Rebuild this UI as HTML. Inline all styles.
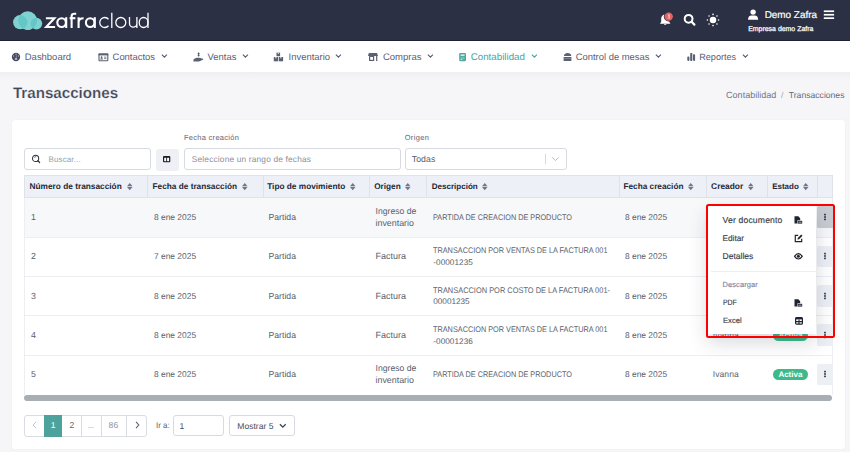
<!DOCTYPE html>
<html><head><meta charset="utf-8"><style>
*{box-sizing:border-box;margin:0;padding:0}
html,body{width:850px;height:452px;overflow:hidden}
body{background:#f6f6f9;font-family:"Liberation Sans",sans-serif;position:relative;text-rendering:geometricPrecision}
</style></head><body>
<div style="position:absolute;left:0;top:0;width:850px;height:41px;background:#2b3044"></div>
<div style="position:absolute;left:0;top:40px;width:850px;height:1px;background:#1c2133"></div>
<svg style="position:absolute;left:0;top:0" width="160" height="41" viewBox="0 0 160 41">
<defs><clipPath id="cb"><circle cx="27.7" cy="20.6" r="9.4"/></clipPath></defs>
<g fill="#80d2d2">
<circle cx="20.2" cy="22.2" r="7.1"/>
<circle cx="27.7" cy="20.6" r="9.4"/>
<circle cx="36.4" cy="23.6" r="5.8"/>
<circle cx="28" cy="24.5" r="5.6"/>
</g>
<g fill="#64c7c7" clip-path="url(#cb)">
<circle cx="20.2" cy="22.2" r="7.1"/>
<circle cx="36.4" cy="23.6" r="5.8"/>
</g>
<g fill="none" stroke="#fff" stroke-width="2.1">
<path d="M45.9 18.2H54.4L46.2 27H55.1" stroke-linejoin="miter"/>
<ellipse cx="61.6" cy="22.6" rx="4.3" ry="4.4"/>
<path d="M66.2 17.2V28"/>
<path d="M71.6 28V16.2C71.6 14.3 72.8 13.8 74.6 13.8H76.2"/>
<path d="M69.6 18.2H75.4"/>
<path d="M78.6 17.2V28M78.6 22.6C78.6 19.6 80.4 18.2 83.6 18.2"/>
<ellipse cx="90.2" cy="22.6" rx="4.3" ry="4.4"/>
<path d="M94.8 17.2V28"/>
</g>
<g fill="none" stroke="#fff" stroke-width="1.3">
<path d="M108.5 19.2A5 5 0 1 0 108.5 25.8"/>
<path d="M111.8 12.8V28"/>
<circle cx="120.8" cy="22.5" r="5"/>
<path d="M129.5 17V23.4A3.7 3.7 0 0 0 136.9 23.4V17M136.9 22V28"/>
<ellipse cx="143.6" cy="22.5" rx="4.4" ry="5"/>
<path d="M148 12.8V28"/>
</g>
</svg>
<svg style="position:absolute;left:656px;top:10px" width="20" height="20" viewBox="0 0 20 20">
<path d="M9.2 4.6c-2.4 0-4 1.9-4 4.2v3l-1.2 1.9h10.4l-1.2-1.9v-3c0-2.3-1.6-4.2-4-4.2z" fill="#fff"/>
<path d="M7.9 13.9a1.4 1.4 0 0 0 2.6 0z" fill="#fff"/>
<circle cx="12.7" cy="6.6" r="4.9" fill="#2b3044"/>
<circle cx="12.7" cy="6.6" r="4.2" fill="#e96262"/>
<path d="M12.3 5.1l0.8-0.5v4" stroke="#fff" stroke-width="0.9" fill="none" opacity=".95"/>
</svg>
<svg style="position:absolute;left:682px;top:12px" width="16" height="16" viewBox="0 0 16 16">
<circle cx="6.6" cy="6.8" r="3.9" stroke="#fff" stroke-width="2" fill="none"/>
<path d="M9.6 9.8L12.4 12.6" stroke="#fff" stroke-width="2.2" stroke-linecap="round"/>
</svg>
<svg style="position:absolute;left:705.2px;top:11.6px" width="16" height="16" viewBox="0 0 16 16">
<circle cx="8" cy="8" r="3.25" fill="#fff"/>
<g fill="#fff"><circle cx="13.60" cy="8.00" r="0.8"/><circle cx="11.96" cy="11.96" r="0.8"/><circle cx="8.00" cy="13.60" r="0.8"/><circle cx="4.04" cy="11.96" r="0.8"/><circle cx="2.40" cy="8.00" r="0.8"/><circle cx="4.04" cy="4.04" r="0.8"/><circle cx="8.00" cy="2.40" r="0.8"/><circle cx="11.96" cy="4.04" r="0.8"/></g>
</svg>
<svg style="position:absolute;left:747px;top:9px" width="13" height="12" viewBox="0 0 13 12">
<circle cx="6.1" cy="3.1" r="2.7" fill="#fff"/>
<path d="M1 10.8c0-2.8 1.5-4.3 3.3-4.3h3.6c1.8 0 3.3 1.5 3.3 4.3z" fill="#fff"/>
</svg>
<svg style="position:absolute;left:823px;top:10px" width="12" height="10" viewBox="0 0 12 10">
<rect x="0.8" y="0.4" width="10.3" height="1.7" fill="#fff"/><rect x="0.8" y="3.9" width="10.3" height="1.7" fill="#fff"/><rect x="0.8" y="7.3" width="10.3" height="1.7" fill="#fff"/>
</svg>
<div style="position:absolute;left:764.70px;top:9.10px;font-size:9.912px;line-height:13px;font-weight:400;color:#ffffff;white-space:nowrap;-webkit-text-stroke:0.2px #fff">Demo Zafra</div>
<div style="position:absolute;left:748.20px;top:24.60px;font-size:6.955px;line-height:9px;font-weight:400;color:#ffffff;white-space:nowrap;-webkit-text-stroke:0.25px #fff">Empresa demo Zafra</div>
<div style="position:absolute;left:0;top:72px;width:850px;height:8px;background:linear-gradient(rgba(30,35,60,.035),rgba(30,35,60,0))"></div>
<div style="position:absolute;left:0;top:41px;width:850px;height:31px;background:#fff"></div>
<div style="position:absolute;left:24.80px;top:52.30px;font-size:9.468px;line-height:12px;font-weight:400;color:#5b6072;white-space:nowrap">Dashboard</div>
<div style="position:absolute;left:112.60px;top:51.30px;font-size:9.422px;line-height:12px;font-weight:400;color:#5b6072;white-space:nowrap">Contactos</div>
<svg style="position:absolute;left:160.5px;top:53px" width="7" height="6" viewBox="0 0 7 6"><path d="M0.9 1.6L3.4 4.1L5.9 1.6" stroke="#5b6072" stroke-width="1.2" fill="none"/></svg>
<div style="position:absolute;left:207.60px;top:51.30px;font-size:9.423px;line-height:12px;font-weight:400;color:#5b6072;white-space:nowrap;transform:scaleX(1.0000);transform-origin:0 0">Ventas</div>
<svg style="position:absolute;left:241.5px;top:53px" width="7" height="6" viewBox="0 0 7 6"><path d="M0.9 1.6L3.4 4.1L5.9 1.6" stroke="#5b6072" stroke-width="1.2" fill="none"/></svg>
<div style="position:absolute;left:288.60px;top:51.30px;font-size:9.433px;line-height:12px;font-weight:400;color:#5b6072;white-space:nowrap">Inventario</div>
<svg style="position:absolute;left:335.2px;top:53px" width="7" height="6" viewBox="0 0 7 6"><path d="M0.9 1.6L3.4 4.1L5.9 1.6" stroke="#5b6072" stroke-width="1.2" fill="none"/></svg>
<div style="position:absolute;left:383.00px;top:52.30px;font-size:9.497px;line-height:12px;font-weight:400;color:#5b6072;white-space:nowrap">Compras</div>
<svg style="position:absolute;left:427.1px;top:53px" width="7" height="6" viewBox="0 0 7 6"><path d="M0.9 1.6L3.4 4.1L5.9 1.6" stroke="#5b6072" stroke-width="1.2" fill="none"/></svg>
<div style="position:absolute;left:470.70px;top:51.30px;font-size:9.755px;line-height:13px;font-weight:400;color:#4aa79f;white-space:nowrap">Contabilidad</div>
<svg style="position:absolute;left:530.6px;top:53px" width="7" height="6" viewBox="0 0 7 6"><path d="M0.9 1.6L3.4 4.1L5.9 1.6" stroke="#4aa79f" stroke-width="1.2" fill="none"/></svg>
<div style="position:absolute;left:575.70px;top:51.30px;font-size:9.434px;line-height:12px;font-weight:400;color:#5b6072;white-space:nowrap">Control de mesas</div>
<svg style="position:absolute;left:654.5px;top:53px" width="7" height="6" viewBox="0 0 7 6"><path d="M0.9 1.6L3.4 4.1L5.9 1.6" stroke="#5b6072" stroke-width="1.2" fill="none"/></svg>
<div style="position:absolute;left:699.20px;top:51.30px;font-size:9.123px;line-height:12px;font-weight:400;color:#5b6072;white-space:nowrap">Reportes</div>
<svg style="position:absolute;left:741.5px;top:53px" width="7" height="6" viewBox="0 0 7 6"><path d="M0.9 1.6L3.4 4.1L5.9 1.6" stroke="#5b6072" stroke-width="1.2" fill="none"/></svg>
<svg style="position:absolute;left:11px;top:52px" width="10" height="10" viewBox="0 0 10 10">
<circle cx="5" cy="5" r="4.15" fill="#474c63"/><g fill="#a4a8b6"><circle cx="5" cy="2.3" r="0.75"/><circle cx="2.6" cy="4" r="0.7"/><circle cx="7.4" cy="4" r="0.7"/></g><path d="M3.7 7.6a1.3 1.3 0 0 1 2.6 0z" fill="#fff"/><path d="M5 6.6L5.6 3.4" stroke="#a4a8b6" stroke-width="0.6"/></svg>
<svg style="position:absolute;left:97.5px;top:53px" width="11" height="9" viewBox="0 0 11 9">
<rect x="1" y="1" width="8.8" height="6.8" rx="0.6" fill="none" stroke="#5b6072" stroke-width="1.1"/><rect x="0.5" y="0.5" width="9.8" height="1.9" fill="#5b6072"/>
<circle cx="3.6" cy="4.2" r="0.9" fill="#5b6072"/><path d="M2.2 6.6c0-1 .6-1.3 1.4-1.3s1.4.3 1.4 1.3z" fill="#5b6072"/><rect x="6.1" y="3.7" width="2.3" height="0.8" fill="#5b6072"/><rect x="6.1" y="5.3" width="2.3" height="0.8" fill="#5b6072"/></svg>
<svg style="position:absolute;left:192.5px;top:52px" width="11" height="10" viewBox="0 0 11 10">
<path d="M5.6 0.5V4.6" stroke="#5b6072" stroke-width="1.1"/><path d="M4.6 1.6h2M4.6 3.4h2" stroke="#5b6072" stroke-width="0.9"/>
<path d="M0.5 7.5c1.5-1.6 3-2 5-1.8l2.4 0.3c0.8 0.2 0.7 1 0 1.1L5.6 7.2l4-0.6L10.4 7.5 6 9.5H0.5z" fill="#5b6072"/></svg>
<svg style="position:absolute;left:272.8px;top:52px" width="11" height="10" viewBox="0 0 11 10">
<rect x="3.5" y="0.6" width="3.6" height="3.6" fill="#5b6072"/><rect x="0.8" y="5" width="4.3" height="4.3" fill="#5b6072"/><rect x="5.8" y="5" width="4.3" height="4.3" fill="#5b6072"/>
<rect x="4.8" y="0.6" width="1" height="1.3" fill="#fff"/><rect x="2.4" y="5" width="1" height="1.3" fill="#fff"/><rect x="7.4" y="5" width="1" height="1.3" fill="#fff"/></svg>
<svg style="position:absolute;left:367px;top:52px" width="12" height="10" viewBox="0 0 12 10">
<path d="M1.9 0.9H10L11 3.9H0.9z" fill="#5b6072"/><rect x="2" y="3.9" width="5.2" height="5.2" rx="0.6" fill="#5b6072"/><rect x="3.2" y="5" width="2.8" height="2.8" fill="#fff"/><rect x="9.1" y="3.9" width="1.2" height="5.2" fill="#5b6072"/></svg>
<svg style="position:absolute;left:459px;top:52.8px" width="8" height="9" viewBox="0 0 8 9">
<rect x="0.2" y="0.1" width="6.8" height="8.1" rx="1.1" fill="#4aa79f"/><rect x="1.6" y="1.4" width="4" height="1.5" fill="#fff" opacity=".85"/>
<rect x="1.6" y="3.8" width="4" height="2.6" fill="#fff" opacity=".25"/><rect x="1.6" y="6.1" width="1.6" height="0.9" fill="#fff" opacity=".8"/></svg>
<svg style="position:absolute;left:562.5px;top:52px" width="9" height="10" viewBox="0 0 9 10">
<path d="M0.9 3.9C1.2 1.8 2.6 1 4.6 1S8 1.8 8.3 3.9z" fill="#5b6072"/><rect x="0.6" y="5" width="7.8" height="4" rx="0.4" fill="#5b6072"/><rect x="0.6" y="6.4" width="7.8" height="0.6" fill="#fff" opacity=".3"/></svg>
<svg style="position:absolute;left:687px;top:52px" width="9" height="10" viewBox="0 0 9 10">
<rect x="0.3" y="4.6" width="2.1" height="4.3" rx="0.8" fill="#5b6072"/><rect x="3.2" y="0.9" width="2.1" height="8" rx="0.6" fill="#5b6072"/><rect x="6" y="2.2" width="2.1" height="6.7" rx="0.8" fill="#5b6072"/></svg>
<div style="position:absolute;left:12.90px;top:83.90px;font-size:15.16px;line-height:19px;font-weight:700;color:#3f4454;white-space:nowrap;-webkit-text-stroke:0.22px #f6f6f9">Transacciones</div>
<div style="position:absolute;left:726.10px;top:89.00px;font-size:9.028px;line-height:12px;font-weight:400;color:#717689;white-space:nowrap;transform:scaleX(1.0000);transform-origin:0 0">Contabilidad</div>
<div style="position:absolute;left:781.00px;top:90.00px;font-size:8.5px;line-height:11px;font-weight:400;color:#a0a4b0;white-space:nowrap">/</div>
<div style="position:absolute;left:788.80px;top:90.00px;font-size:8.629px;line-height:11px;font-weight:400;color:#646979;white-space:nowrap">Transacciones</div>
<div style="position:absolute;left:12px;top:120px;width:833px;height:328.5px;background:#fff;border-radius:3px;box-shadow:0 0 1.5px rgba(40,45,70,.08)"></div>
<div style="position:absolute;left:184.00px;top:133.30px;font-size:7.452px;line-height:10px;font-weight:400;color:#5f6474;white-space:nowrap;letter-spacing:0.308px">Fecha creación</div>
<div style="position:absolute;left:404.70px;top:133.10px;font-size:7.452px;line-height:10px;font-weight:400;color:#5f6474;white-space:nowrap;letter-spacing:0.371px">Origen</div>
<div style="position:absolute;left:24px;top:148.3px;width:126.5px;height:22px;border:1px solid #d7dae0;border-radius:3px;background:#fff"></div>
<svg style="position:absolute;left:30px;top:153px" width="12" height="12" viewBox="0 0 12 12">
<circle cx="5.6" cy="5.4" r="3.1" stroke="#2f3441" stroke-width="1.05" fill="none"/><path d="M4.3 4.4a1.8 1.8 0 0 1 2-0.6" stroke="#2f3441" stroke-width="0.8" fill="none"/><path d="M7.9 7.7L9.6 9.5" stroke="#2f3441" stroke-width="1.2" stroke-linecap="round"/></svg>
<div style="position:absolute;left:48.60px;top:154.90px;font-size:7.992px;line-height:10px;font-weight:400;color:#9aa0ad;white-space:nowrap;letter-spacing:0.117px">Buscar...</div>
<div style="position:absolute;left:155.5px;top:148.5px;width:23.5px;height:22px;border-radius:3px;background:#eef0f5"></div>
<svg style="position:absolute;left:163px;top:155.8px" width="8" height="7" viewBox="0 0 8 7">
<rect x="0" y="0" width="7.3" height="6.2" rx="0.9" fill="#1a1e2a"/><rect x="1.2" y="1.8" width="2" height="3.4" fill="#fff"/><rect x="4.1" y="1.8" width="2" height="3.4" fill="#fff"/></svg>
<div style="position:absolute;left:183.7px;top:148.3px;width:217px;height:21.8px;border:1px solid #d7dae0;border-radius:3px;background:#fff"></div>
<div style="position:absolute;left:191.80px;top:153.70px;font-size:8.316px;line-height:11px;font-weight:400;color:#8a8f9c;white-space:nowrap;letter-spacing:0.185px">Seleccione un rango de fechas</div>
<div style="position:absolute;left:404.5px;top:147.8px;width:162.7px;height:22.2px;border:1px solid #d7dae0;border-radius:3px;background:#fff"></div>
<div style="position:absolute;left:411.80px;top:154.20px;font-size:8.748px;line-height:11px;font-weight:400;color:#585d6b;white-space:nowrap;letter-spacing:0.040px">Todas</div>
<div style="position:absolute;left:544.5px;top:153.7px;width:1px;height:10.8px;background:#d5d8de"></div>
<svg style="position:absolute;left:551px;top:156px" width="9" height="6" viewBox="0 0 9 6"><path d="M1 1.2L4.4 4.6L7.8 1.2" stroke="#b8bcc4" stroke-width="1" fill="none"/></svg>
<div style="position:absolute;left:24px;top:175.2px;width:808.5px;height:22.6px;background:#edf0f6;border:1px solid #dfe2e8"></div>
<div style="position:absolute;left:147.0px;top:175.2px;width:1px;height:22.6px;background:#dfe2e8"></div>
<div style="position:absolute;left:262.5px;top:175.2px;width:1px;height:22.6px;background:#dfe2e8"></div>
<div style="position:absolute;left:369.2px;top:175.2px;width:1px;height:22.6px;background:#dfe2e8"></div>
<div style="position:absolute;left:425.9px;top:175.2px;width:1px;height:22.6px;background:#dfe2e8"></div>
<div style="position:absolute;left:618.5px;top:175.2px;width:1px;height:22.6px;background:#dfe2e8"></div>
<div style="position:absolute;left:706.0px;top:175.2px;width:1px;height:22.6px;background:#dfe2e8"></div>
<div style="position:absolute;left:766.5px;top:175.2px;width:1px;height:22.6px;background:#dfe2e8"></div>
<div style="position:absolute;left:817.1px;top:175.2px;width:1px;height:22.6px;background:#dfe2e8"></div>
<div style="position:absolute;left:24px;top:197.8px;width:808.5px;height:39.4px;background:#f7f8fa"></div>
<div style="position:absolute;left:24px;top:197.8px;width:1px;height:197px;background:#eceef2"></div>
<div style="position:absolute;left:831.5px;top:197.8px;width:1px;height:197px;background:#eceef2"></div>
<div style="position:absolute;left:24px;top:236.7px;width:808.5px;height:1px;background:#eceef2"></div>
<div style="position:absolute;left:24px;top:276.0px;width:808.5px;height:1px;background:#eceef2"></div>
<div style="position:absolute;left:24px;top:315.3px;width:808.5px;height:1px;background:#eceef2"></div>
<div style="position:absolute;left:24px;top:354.6px;width:808.5px;height:1px;background:#eceef2"></div>
<div style="position:absolute;left:29.50px;top:181.40px;font-size:8.31px;line-height:11px;font-weight:700;color:#222736;white-space:nowrap">Número de transacción</div>
<svg style="position:absolute;left:126.6px;top:182.8px" width="6" height="8" viewBox="0 0 6 8"><path d="M0 3.35L2.75 0L5.5 3.35z M0 3.95L2.75 7.3L5.5 3.95z" fill="#70758a"/></svg>
<div style="position:absolute;left:152.50px;top:181.40px;font-size:8.288px;line-height:11px;font-weight:700;color:#222736;white-space:nowrap">Fecha de transacción</div>
<svg style="position:absolute;left:242px;top:182.8px" width="6" height="8" viewBox="0 0 6 8"><path d="M0 3.35L2.75 0L5.5 3.35z M0 3.95L2.75 7.3L5.5 3.95z" fill="#70758a"/></svg>
<div style="position:absolute;left:267.20px;top:181.40px;font-size:8.29px;line-height:11px;font-weight:700;color:#222736;white-space:nowrap">Tipo de movimiento</div>
<svg style="position:absolute;left:350px;top:182.8px" width="6" height="8" viewBox="0 0 6 8"><path d="M0 3.35L2.75 0L5.5 3.35z M0 3.95L2.75 7.3L5.5 3.95z" fill="#70758a"/></svg>
<div style="position:absolute;left:374.20px;top:181.40px;font-size:8.226px;line-height:11px;font-weight:700;color:#222736;white-space:nowrap">Origen</div>
<svg style="position:absolute;left:405.3px;top:182.8px" width="6" height="8" viewBox="0 0 6 8"><path d="M0 3.35L2.75 0L5.5 3.35z M0 3.95L2.75 7.3L5.5 3.95z" fill="#70758a"/></svg>
<div style="position:absolute;left:431.80px;top:181.40px;font-size:8.022px;line-height:11px;font-weight:700;color:#222736;white-space:nowrap">Descripción</div>
<svg style="position:absolute;left:482px;top:182.8px" width="6" height="8" viewBox="0 0 6 8"><path d="M0 3.35L2.75 0L5.5 3.35z M0 3.95L2.75 7.3L5.5 3.95z" fill="#70758a"/></svg>
<div style="position:absolute;left:623.50px;top:181.40px;font-size:8.246px;line-height:11px;font-weight:700;color:#222736;white-space:nowrap;letter-spacing:0.000px">Fecha creación</div>
<svg style="position:absolute;left:688.3px;top:182.8px" width="6" height="8" viewBox="0 0 6 8"><path d="M0 3.35L2.75 0L5.5 3.35z M0 3.95L2.75 7.3L5.5 3.95z" fill="#70758a"/></svg>
<div style="position:absolute;left:711.10px;top:181.40px;font-size:8.375px;line-height:11px;font-weight:700;color:#222736;white-space:nowrap">Creador</div>
<svg style="position:absolute;left:747.6px;top:182.8px" width="6" height="8" viewBox="0 0 6 8"><path d="M0 3.35L2.75 0L5.5 3.35z M0 3.95L2.75 7.3L5.5 3.95z" fill="#70758a"/></svg>
<div style="position:absolute;left:772.20px;top:182.40px;font-size:7.98px;line-height:10px;font-weight:700;color:#222736;white-space:nowrap">Estado</div>
<svg style="position:absolute;left:803.3px;top:182.8px" width="6" height="8" viewBox="0 0 6 8"><path d="M0 3.35L2.75 0L5.5 3.35z M0 3.95L2.75 7.3L5.5 3.95z" fill="#70758a"/></svg>
<div style="position:absolute;left:31.00px;top:211.00px;font-size:8.8px;line-height:12px;font-weight:400;color:#5a5f6d;white-space:nowrap">1</div>
<div style="position:absolute;left:153.80px;top:212.00px;font-size:8.448px;line-height:11px;font-weight:400;color:#5a5f6d;white-space:nowrap;transform:scaleX(0.9960);transform-origin:0 0">8 ene 2025</div>
<div style="position:absolute;left:268.50px;top:212.00px;font-size:8.684px;line-height:11px;font-weight:400;color:#5a5f6d;white-space:nowrap">Partida</div>
<div style="position:absolute;left:375.50px;top:206.20px;font-size:8.679px;line-height:11px;font-weight:400;color:#5a5f6d;white-space:nowrap">Ingreso de</div>
<div style="position:absolute;left:375.50px;top:216.80px;font-size:8.885px;line-height:12px;font-weight:400;color:#5a5f6d;white-space:nowrap">inventario</div>
<div style="position:absolute;left:433.30px;top:212.00px;font-size:8.2px;line-height:11px;font-weight:400;color:#5a5f6d;white-space:nowrap;transform:scaleX(0.8901);transform-origin:0 0">PARTIDA DE CREACION DE PRODUCTO</div>
<div style="position:absolute;left:625.20px;top:212.00px;font-size:8.448px;line-height:11px;font-weight:400;color:#5a5f6d;white-space:nowrap;transform:scaleX(0.9960);transform-origin:0 0">8 ene 2025</div>
<div style="position:absolute;left:816.6px;top:206.4px;width:16px;height:21.8px;background:#c8cbd1;border-radius:1.5px 0 0 1.5px"></div>
<svg style="position:absolute;left:823px;top:213.0px" width="4" height="8" viewBox="0 0 4 8"><g fill="#1f2430"><rect x="1.2" y="0.8" width="1.6" height="1.6"/><rect x="1.2" y="3.2" width="1.6" height="1.6"/><rect x="1.2" y="5.6" width="1.6" height="1.6"/></g></svg>
<div style="position:absolute;left:31.00px;top:250.30px;font-size:8.8px;line-height:12px;font-weight:400;color:#5a5f6d;white-space:nowrap">2</div>
<div style="position:absolute;left:153.80px;top:251.30px;font-size:8.448px;line-height:11px;font-weight:400;color:#5a5f6d;white-space:nowrap;transform:scaleX(0.9960);transform-origin:0 0">7 ene 2025</div>
<div style="position:absolute;left:268.50px;top:251.30px;font-size:8.684px;line-height:11px;font-weight:400;color:#5a5f6d;white-space:nowrap">Partida</div>
<div style="position:absolute;left:375.50px;top:250.30px;font-size:9.001px;line-height:12px;font-weight:400;color:#5a5f6d;white-space:nowrap">Factura</div>
<div style="position:absolute;left:433.30px;top:245.30px;font-size:8.2px;line-height:11px;font-weight:400;color:#5a5f6d;white-space:nowrap;transform:scaleX(0.8926);transform-origin:0 0">TRANSACCION POR VENTAS DE LA FACTURA 001</div>
<div style="position:absolute;left:433.30px;top:256.90px;font-size:8.2px;line-height:11px;font-weight:400;color:#5a5f6d;white-space:nowrap;letter-spacing:0.043px">-00001235</div>
<div style="position:absolute;left:625.20px;top:251.30px;font-size:8.448px;line-height:11px;font-weight:400;color:#5a5f6d;white-space:nowrap;transform:scaleX(0.9960);transform-origin:0 0">8 ene 2025</div>
<div style="position:absolute;left:816.6px;top:245.70000000000002px;width:16px;height:21.8px;background:#ecf0f5;border-radius:1.5px 0 0 1.5px"></div>
<svg style="position:absolute;left:823px;top:252.3px" width="4" height="8" viewBox="0 0 4 8"><g fill="#1f2430"><rect x="1.2" y="0.8" width="1.6" height="1.6"/><rect x="1.2" y="3.2" width="1.6" height="1.6"/><rect x="1.2" y="5.6" width="1.6" height="1.6"/></g></svg>
<div style="position:absolute;left:31.00px;top:289.60px;font-size:8.8px;line-height:12px;font-weight:400;color:#5a5f6d;white-space:nowrap">3</div>
<div style="position:absolute;left:153.80px;top:290.60px;font-size:8.448px;line-height:11px;font-weight:400;color:#5a5f6d;white-space:nowrap;transform:scaleX(0.9960);transform-origin:0 0">8 ene 2025</div>
<div style="position:absolute;left:268.50px;top:290.60px;font-size:8.684px;line-height:11px;font-weight:400;color:#5a5f6d;white-space:nowrap">Partida</div>
<div style="position:absolute;left:375.50px;top:289.60px;font-size:9.001px;line-height:12px;font-weight:400;color:#5a5f6d;white-space:nowrap">Factura</div>
<div style="position:absolute;left:433.30px;top:284.60px;font-size:8.2px;line-height:11px;font-weight:400;color:#5a5f6d;white-space:nowrap;transform:scaleX(0.9075);transform-origin:0 0">TRANSACCION POR COSTO DE LA FACTURA 001-</div>
<div style="position:absolute;left:433.30px;top:296.20px;font-size:8.2px;line-height:11px;font-weight:400;color:#5a5f6d;white-space:nowrap;letter-spacing:-0.020px">00001235</div>
<div style="position:absolute;left:625.20px;top:290.60px;font-size:8.448px;line-height:11px;font-weight:400;color:#5a5f6d;white-space:nowrap;transform:scaleX(0.9960);transform-origin:0 0">8 ene 2025</div>
<div style="position:absolute;left:816.6px;top:285.0px;width:16px;height:21.8px;background:#ecf0f5;border-radius:1.5px 0 0 1.5px"></div>
<svg style="position:absolute;left:823px;top:291.6px" width="4" height="8" viewBox="0 0 4 8"><g fill="#1f2430"><rect x="1.2" y="0.8" width="1.6" height="1.6"/><rect x="1.2" y="3.2" width="1.6" height="1.6"/><rect x="1.2" y="5.6" width="1.6" height="1.6"/></g></svg>
<div style="position:absolute;left:31.00px;top:328.90px;font-size:8.8px;line-height:12px;font-weight:400;color:#5a5f6d;white-space:nowrap">4</div>
<div style="position:absolute;left:153.80px;top:329.90px;font-size:8.448px;line-height:11px;font-weight:400;color:#5a5f6d;white-space:nowrap;transform:scaleX(0.9960);transform-origin:0 0">8 ene 2025</div>
<div style="position:absolute;left:268.50px;top:329.90px;font-size:8.684px;line-height:11px;font-weight:400;color:#5a5f6d;white-space:nowrap">Partida</div>
<div style="position:absolute;left:375.50px;top:328.90px;font-size:9.001px;line-height:12px;font-weight:400;color:#5a5f6d;white-space:nowrap">Factura</div>
<div style="position:absolute;left:433.30px;top:323.90px;font-size:8.2px;line-height:11px;font-weight:400;color:#5a5f6d;white-space:nowrap;transform:scaleX(0.8926);transform-origin:0 0">TRANSACCION POR VENTAS DE LA FACTURA 001</div>
<div style="position:absolute;left:433.30px;top:335.50px;font-size:8.2px;line-height:11px;font-weight:400;color:#5a5f6d;white-space:nowrap;letter-spacing:0.043px">-00001236</div>
<div style="position:absolute;left:625.20px;top:329.90px;font-size:8.448px;line-height:11px;font-weight:400;color:#5a5f6d;white-space:nowrap;transform:scaleX(0.9960);transform-origin:0 0">8 ene 2025</div>
<div style="position:absolute;left:712.70px;top:329.90px;font-size:8.532px;line-height:11px;font-weight:400;color:#5a5f6d;white-space:nowrap;letter-spacing:0.100px">Ivanna</div>
<div style="position:absolute;left:773.2px;top:329.5px;width:34.4px;height:11.7px;border-radius:6px;background:#3dba8a"></div>
<div style="position:absolute;left:778.40px;top:330.70px;font-size:7.995px;line-height:10px;font-weight:700;color:#ffffff;white-space:nowrap">Activa</div>
<div style="position:absolute;left:816.6px;top:324.29999999999995px;width:16px;height:21.8px;background:#ecf0f5;border-radius:1.5px 0 0 1.5px"></div>
<svg style="position:absolute;left:823px;top:330.9px" width="4" height="8" viewBox="0 0 4 8"><g fill="#1f2430"><rect x="1.2" y="0.8" width="1.6" height="1.6"/><rect x="1.2" y="3.2" width="1.6" height="1.6"/><rect x="1.2" y="5.6" width="1.6" height="1.6"/></g></svg>
<div style="position:absolute;left:31.00px;top:368.20px;font-size:8.8px;line-height:12px;font-weight:400;color:#5a5f6d;white-space:nowrap">5</div>
<div style="position:absolute;left:153.80px;top:369.20px;font-size:8.448px;line-height:11px;font-weight:400;color:#5a5f6d;white-space:nowrap;transform:scaleX(0.9960);transform-origin:0 0">8 ene 2025</div>
<div style="position:absolute;left:268.50px;top:369.20px;font-size:8.684px;line-height:11px;font-weight:400;color:#5a5f6d;white-space:nowrap">Partida</div>
<div style="position:absolute;left:375.50px;top:363.40px;font-size:8.679px;line-height:11px;font-weight:400;color:#5a5f6d;white-space:nowrap">Ingreso de</div>
<div style="position:absolute;left:375.50px;top:374.00px;font-size:8.885px;line-height:12px;font-weight:400;color:#5a5f6d;white-space:nowrap">inventario</div>
<div style="position:absolute;left:433.30px;top:369.20px;font-size:8.2px;line-height:11px;font-weight:400;color:#5a5f6d;white-space:nowrap;transform:scaleX(0.8901);transform-origin:0 0">PARTIDA DE CREACION DE PRODUCTO</div>
<div style="position:absolute;left:625.20px;top:369.20px;font-size:8.448px;line-height:11px;font-weight:400;color:#5a5f6d;white-space:nowrap;transform:scaleX(0.9960);transform-origin:0 0">8 ene 2025</div>
<div style="position:absolute;left:712.70px;top:369.20px;font-size:8.532px;line-height:11px;font-weight:400;color:#5a5f6d;white-space:nowrap;letter-spacing:0.100px">Ivanna</div>
<div style="position:absolute;left:773.2px;top:368.8px;width:34.4px;height:11.7px;border-radius:6px;background:#3dba8a"></div>
<div style="position:absolute;left:778.40px;top:370.00px;font-size:7.995px;line-height:10px;font-weight:700;color:#ffffff;white-space:nowrap">Activa</div>
<div style="position:absolute;left:816.6px;top:363.59999999999997px;width:16px;height:21.8px;background:#ecf0f5;border-radius:1.5px 0 0 1.5px"></div>
<svg style="position:absolute;left:823px;top:370.2px" width="4" height="8" viewBox="0 0 4 8"><g fill="#1f2430"><rect x="1.2" y="0.8" width="1.6" height="1.6"/><rect x="1.2" y="3.2" width="1.6" height="1.6"/><rect x="1.2" y="5.6" width="1.6" height="1.6"/></g></svg>
<div style="position:absolute;left:23.8px;top:395px;width:808.7px;height:5.8px;border-radius:3px;background:#a9aeb4"></div>
<div style="position:absolute;left:24.3px;top:415.4px;width:122.3px;height:21.4px;border:1px solid #d9dce2;border-radius:3px;background:#fff"></div>
<div style="position:absolute;left:44px;top:415.4px;width:17.7px;height:21.4px;background:#4da39b"></div>
<div style="position:absolute;left:81.1px;top:415.4px;width:1px;height:21.4px;background:#d9dce2"></div>
<div style="position:absolute;left:101.0px;top:415.4px;width:1px;height:21.4px;background:#d9dce2"></div>
<div style="position:absolute;left:125.8px;top:415.4px;width:1px;height:21.4px;background:#d9dce2"></div>
<svg style="position:absolute;left:31.5px;top:421px" width="5" height="8" viewBox="0 0 5 8"><path d="M4 0.8L1.2 4L4 7.2" stroke="#c2c6ce" stroke-width="1" fill="none"/></svg>
<svg style="position:absolute;left:134.5px;top:421px" width="5" height="8" viewBox="0 0 5 8"><path d="M1 0.8L3.8 4L1 7.2" stroke="#5b6072" stroke-width="1.1" fill="none"/></svg>
<div style="position:absolute;left:50.70px;top:420.30px;font-size:8.5px;line-height:11px;font-weight:400;color:#ffffff;white-space:nowrap">1</div>
<div style="position:absolute;left:69.60px;top:420.30px;font-size:8.5px;line-height:11px;font-weight:400;color:#5b6072;white-space:nowrap">2</div>
<div style="position:absolute;left:87.60px;top:420.30px;font-size:8.16px;line-height:11px;font-weight:400;color:#8b90a0;white-space:nowrap;transform:scaleX(0.8811);transform-origin:0 0">...</div>
<div style="position:absolute;left:108.60px;top:420.30px;font-size:8.618px;line-height:11px;font-weight:400;color:#8b90a0;white-space:nowrap">86</div>
<div style="position:absolute;left:156.30px;top:420.40px;font-size:8.256px;line-height:11px;font-weight:400;color:#5b6072;white-space:nowrap;transform:scaleX(0.9564);transform-origin:0 0">Ir a:</div>
<div style="position:absolute;left:172.7px;top:415.4px;width:51.4px;height:20.8px;border:1px solid #d7dae0;border-radius:3px;background:#fff"></div>
<div style="position:absolute;left:179.50px;top:420.50px;font-size:8.5px;line-height:11px;font-weight:400;color:#454a58;white-space:nowrap">1</div>
<div style="position:absolute;left:229.4px;top:415.4px;width:65.3px;height:20.8px;border:1px solid #d7dae0;border-radius:3px;background:#fff"></div>
<div style="position:absolute;left:237.30px;top:420.50px;font-size:8.553px;line-height:11px;font-weight:400;color:#454a58;white-space:nowrap">Mostrar 5</div>
<svg style="position:absolute;left:279px;top:423px" width="8" height="6" viewBox="0 0 8 6"><path d="M0.9 1.2L3.8 4.1L6.7 1.2" stroke="#3e4352" stroke-width="1.3" fill="none"/></svg>
<div style="position:absolute;left:708px;top:205px;width:108px;height:128.5px;background:#fff;box-shadow:0 8px 20px rgba(30,35,60,.18);border-radius:3px 3px 0 0"></div>
<div style="position:absolute;left:722.50px;top:214.80px;font-size:8.64px;line-height:11px;font-weight:400;color:#3a3e4a;white-space:nowrap;letter-spacing:0.157px;-webkit-text-stroke:0.15px #3a3e4a">Ver documento</div>
<div style="position:absolute;left:722.50px;top:233.30px;font-size:8.265px;line-height:11px;font-weight:400;color:#3a3e4a;white-space:nowrap;-webkit-text-stroke:0.15px #3a3e4a">Editar</div>
<div style="position:absolute;left:722.50px;top:251.00px;font-size:8.524px;line-height:11px;font-weight:400;color:#3a3e4a;white-space:nowrap;transform:scaleX(1.0000);transform-origin:0 0;-webkit-text-stroke:0.15px #3a3e4a">Detalles</div>
<div style="position:absolute;left:710.5px;top:271px;width:105.5px;height:1px;background:#eceef3"></div>
<div style="position:absolute;left:722.50px;top:280.20px;font-size:7.452px;line-height:10px;font-weight:400;color:#7d81a1;white-space:nowrap;letter-spacing:0.120px;-webkit-text-stroke:0.12px #7d81a1">Descargar</div>
<div style="position:absolute;left:722.50px;top:298.00px;font-size:7.68px;line-height:10px;font-weight:400;color:#3a3e4a;white-space:nowrap;transform:scaleX(0.8984);transform-origin:0 0;-webkit-text-stroke:0.15px #3a3e4a">PDF</div>
<div style="position:absolute;left:722.50px;top:316.40px;font-size:7.68px;line-height:10px;font-weight:400;color:#3a3e4a;white-space:nowrap;transform:scaleX(0.9957);transform-origin:0 0;-webkit-text-stroke:0.15px #3a3e4a">Excel</div>
<svg style="position:absolute;left:794px;top:216px" width="9" height="8" viewBox="0 0 9 8">
<path d="M0.5 0.3H4.3L6.2 2.2V4.2H3.4V7.6H0.5z" fill="#1f2430"/><rect x="3.8" y="4.8" width="4.4" height="2.8" fill="#1f2430"/><rect x="4.4" y="5.7" width="3.2" height="1" fill="#fff" opacity=".6"/></svg>
<svg style="position:absolute;left:794px;top:298.5px" width="9" height="8" viewBox="0 0 9 8">
<path d="M0.5 0.3H4.3L6.2 2.2V4.2H3.4V7.6H0.5z" fill="#1f2430"/><rect x="3.8" y="4.8" width="4.4" height="2.8" fill="#1f2430"/><rect x="4.4" y="5.7" width="3.2" height="1" fill="#fff" opacity=".6"/></svg>
<svg style="position:absolute;left:794px;top:233.5px" width="9" height="9" viewBox="0 0 9 9">
<path d="M4.2 1.3H1.3V7.7H7.7V4.8" stroke="#1f2430" stroke-width="1.2" fill="none"/><path d="M3.4 5.6L3.8 3.9L7.2 0.5L8.5 1.8L5.1 5.2z" fill="#1f2430"/></svg>
<svg style="position:absolute;left:793.8px;top:253px" width="9" height="7" viewBox="0 0 9 7">
<path d="M0.6 3.3C1.9 1.3 3.1 0.6 4.4 0.6S6.9 1.3 8.2 3.3C6.9 5.3 5.7 6 4.4 6S1.9 5.3 0.6 3.3z" fill="none" stroke="#1f2430" stroke-width="1.2"/><circle cx="4.4" cy="3.3" r="1.5" fill="#1f2430"/></svg>
<svg style="position:absolute;left:794.5px;top:316.5px" width="8" height="8" viewBox="0 0 8 8">
<rect x="0.6" y="0.6" width="6.8" height="6.6" rx="1" fill="none" stroke="#1f2430" stroke-width="1.2"/><rect x="0.6" y="0.6" width="6.8" height="1.8" fill="#1f2430"/><path d="M0.6 4.6H7.4M4 2.4V7.2" stroke="#1f2430" stroke-width="1.1"/></svg>
<div style="position:absolute;left:706px;top:204.2px;width:128.8px;height:133.6px;border:2.7px solid #ff0000;border-radius:2.5px"></div>
</body></html>
